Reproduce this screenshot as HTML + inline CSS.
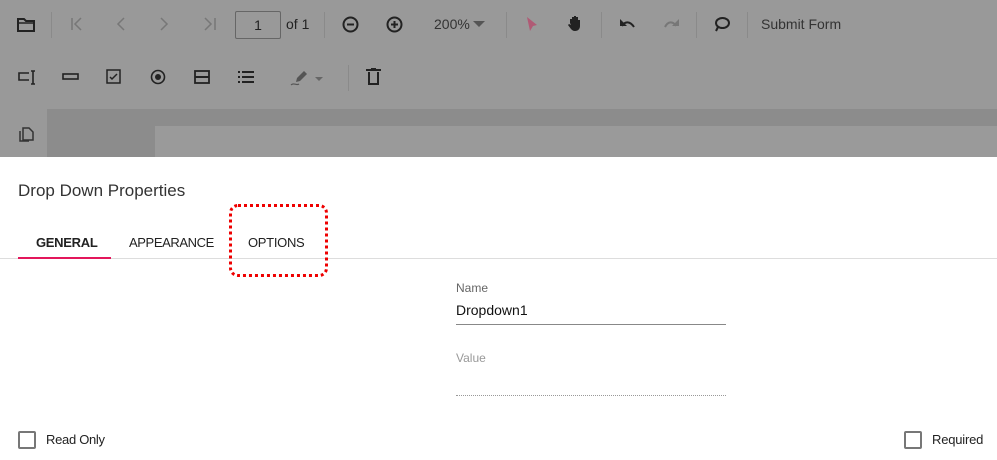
<!DOCTYPE html>
<html><head><meta charset="utf-8"><style>
*{margin:0;padding:0;box-sizing:border-box}
body{width:997px;height:460px;overflow:hidden;position:relative;background:#fff;font-family:"Liberation Sans",sans-serif;color:#222}
.a{position:absolute}
.sep{position:absolute;width:1px;background:#8a8a8a}
svg{position:absolute;overflow:visible}
</style></head><body>
<div class="a" style="left:0;top:0;width:997px;height:109px;background:#999"></div>
<div class="a" style="left:0;top:109px;width:997px;height:48px;background:#8c8c8c"></div>
<div class="a" style="left:0;top:109px;width:47px;height:48px;background:#999"></div>
<div class="a" style="left:155px;top:126px;width:842px;height:31px;background:#9a9a9a"></div>

<svg style="left:17px;top:17px" width="18" height="16"><path d="M1 2h6l2 2h8v10H1z" fill="none" stroke="#222" stroke-width="2"/><path d="M1 6h16" stroke="#222" stroke-width="1.5"/></svg>
<div class="sep" style="left:51px;top:12px;height:26px"></div>
<svg style="left:70px;top:17px" width="14" height="14" fill="none" stroke="#777" stroke-width="1.5"><path d="M2 1v12M11 1L5 7l6 6"/></svg>
<svg style="left:116px;top:17px" width="10" height="14" fill="none" stroke="#777" stroke-width="1.5"><path d="M8 1L2 7l6 6"/></svg>
<svg style="left:159px;top:17px" width="10" height="14" fill="none" stroke="#777" stroke-width="1.5"><path d="M2 1l6 6-6 6"/></svg>
<svg style="left:203px;top:17px" width="14" height="14" fill="none" stroke="#777" stroke-width="1.5"><path d="M2 1l6 6-6 6M12 1v12"/></svg>
<div class="a" style="left:235px;top:11px;width:46px;height:28px;border:1px solid #666;border-radius:2px;font-size:14px;text-align:center;line-height:26px">1</div>
<div class="a" style="left:286px;top:16px;font-size:14px">of 1</div>
<div class="sep" style="left:324px;top:12px;height:26px"></div>
<svg style="left:342px;top:16px" width="17" height="17" fill="none" stroke="#222" stroke-width="2"><circle cx="8.5" cy="8.5" r="7"/><path d="M5 8.5h7"/></svg>
<svg style="left:386px;top:16px" width="17" height="17" fill="none" stroke="#222" stroke-width="2"><circle cx="8.5" cy="8.5" r="7"/><path d="M5 8.5h7M8.5 5v7"/></svg>
<div class="a" style="left:434px;top:16px;font-size:14px;color:#333">200%</div>
<svg style="left:473px;top:21px" width="12" height="7"><path d="M0 0h12L6 6z" fill="#555"/></svg>
<div class="sep" style="left:506px;top:12px;height:26px"></div>
<svg style="left:526px;top:16px" width="13" height="18"><path d="M1 1l10 8-4 1 0 0-3 5z" fill="#b05a75"/></svg>
<svg style="left:567px;top:14px" width="17" height="18"><path d="M3 9V5h2v5V3h2v7V2h2v8V3h2v8V6h2v6c0 3-2 5-5 5H8c-2 0-3-1-4-2L1 11l1-1 2 1z" fill="#222"/></svg>
<div class="sep" style="left:601px;top:12px;height:26px"></div>
<svg style="left:619px;top:18px" width="16" height="10"><path d="M3 8C6 3 11 3 15 9" fill="none" stroke="#222" stroke-width="2"/><path d="M1 1v7h7z" fill="#222"/></svg>
<svg style="left:664px;top:18px" width="16" height="10"><path d="M1 9C4 3 9 3 12 8" fill="none" stroke="#777" stroke-width="2"/><path d="M15 1v7H8z" fill="#777"/></svg>
<div class="sep" style="left:696px;top:12px;height:26px"></div>
<svg style="left:714px;top:16px" width="16" height="16" fill="none" stroke="#222" stroke-width="2"><ellipse cx="8.5" cy="7" rx="6.5" ry="5"/><path d="M4 11l-2 4"/></svg>
<div class="sep" style="left:747px;top:12px;height:26px"></div>
<div class="a" style="left:761px;top:16px;font-size:14px;color:#333">Submit Form</div>

<svg style="left:18px;top:70px" width="18" height="15" fill="none" stroke="#222" stroke-width="1.6"><path d="M11 3H1v7h10M13 1h4M15 1v13M13 14h4"/></svg>
<svg style="left:62px;top:73px" width="17" height="8" fill="none" stroke="#222" stroke-width="1.6"><rect x="1" y="1" width="15" height="5"/></svg>
<svg style="left:106px;top:69px" width="15" height="15" fill="none" stroke="#222" stroke-width="1.5"><rect x="1" y="1" width="13" height="13"/><path d="M4 8l2 2 5-5"/></svg>
<svg style="left:150px;top:69px" width="16" height="16"><circle cx="8" cy="8" r="6.5" fill="none" stroke="#222" stroke-width="1.6"/><circle cx="8" cy="8" r="3" fill="#222"/></svg>
<svg style="left:194px;top:70px" width="16" height="14"><rect x="1" y="1" width="14" height="12" fill="none" stroke="#222" stroke-width="1.8"/><rect x="1" y="6" width="14" height="2" fill="#222"/></svg>
<svg style="left:238px;top:71px" width="16" height="12" fill="#222"><rect x="0" y="0" width="2" height="2"/><rect x="4" y="0" width="12" height="2"/><rect x="0" y="5" width="2" height="2"/><rect x="4" y="5" width="12" height="2"/><rect x="0" y="10" width="2" height="2"/><rect x="4" y="10" width="12" height="2"/></svg>
<svg style="left:290px;top:70px" width="18" height="17"><path d="M14 1l3 3-7 7-4 1 1-4z" fill="#555"/><path d="M1 15c3-3 5 1 8-1" fill="none" stroke="#555" stroke-width="1.2"/></svg>
<svg style="left:315px;top:77px" width="8" height="4"><path d="M0 0h8L4 4z" fill="#666"/></svg>
<div class="sep" style="left:348px;top:65px;height:26px"></div>
<svg style="left:366px;top:68px" width="15" height="17" fill="none" stroke="#222" stroke-width="2"><path d="M0 2h15M5 1h5"/><path d="M3 4v12h9V4"/></svg>
<svg style="left:19px;top:127px" width="15" height="15" fill="none" stroke="#333" stroke-width="1.5"><path d="M4 1h6l4 4v8H4zM1 4v10h9"/></svg>

<div class="a" style="left:18px;top:181px;font-size:17px;color:#333">Drop Down Properties</div>
<div class="a" style="left:36px;top:235px;font-size:13px;color:#222;font-weight:bold;letter-spacing:-0.3px">GENERAL</div>
<div class="a" style="left:129px;top:235px;font-size:13px;color:#222;letter-spacing:-0.4px">APPEARANCE</div>
<div class="a" style="left:248px;top:235px;font-size:13px;color:#222;letter-spacing:-0.3px">OPTIONS</div>
<div class="a" style="left:0;top:258px;width:997px;height:1px;background:#ddd"></div>
<div class="a" style="left:18px;top:257px;width:93px;height:2px;background:#e3165b"></div>
<div class="a" style="left:229px;top:204px;width:99px;height:73px;border:3px dotted #e00;border-radius:9px"></div>

<div class="a" style="left:456px;top:281px;font-size:12px;color:#666">Name</div>
<div class="a" style="left:456px;top:302px;font-size:14px;color:#111">Dropdown1</div>
<div class="a" style="left:456px;top:324px;width:270px;height:1px;background:#888"></div>
<div class="a" style="left:456px;top:351px;font-size:12px;color:#999">Value</div>
<div class="a" style="left:456px;top:395px;width:270px;height:0;border-top:1px dotted #999"></div>

<div class="a" style="left:18px;top:431px;width:18px;height:18px;border:2px solid #777;border-radius:2px"></div>
<div class="a" style="left:46px;top:432px;font-size:13px;color:#222;letter-spacing:-0.3px">Read Only</div>
<div class="a" style="left:904px;top:431px;width:18px;height:18px;border:2px solid #777;border-radius:2px"></div>
<div class="a" style="left:932px;top:432px;font-size:13px;color:#222;letter-spacing:-0.2px">Required</div>
</body></html>
